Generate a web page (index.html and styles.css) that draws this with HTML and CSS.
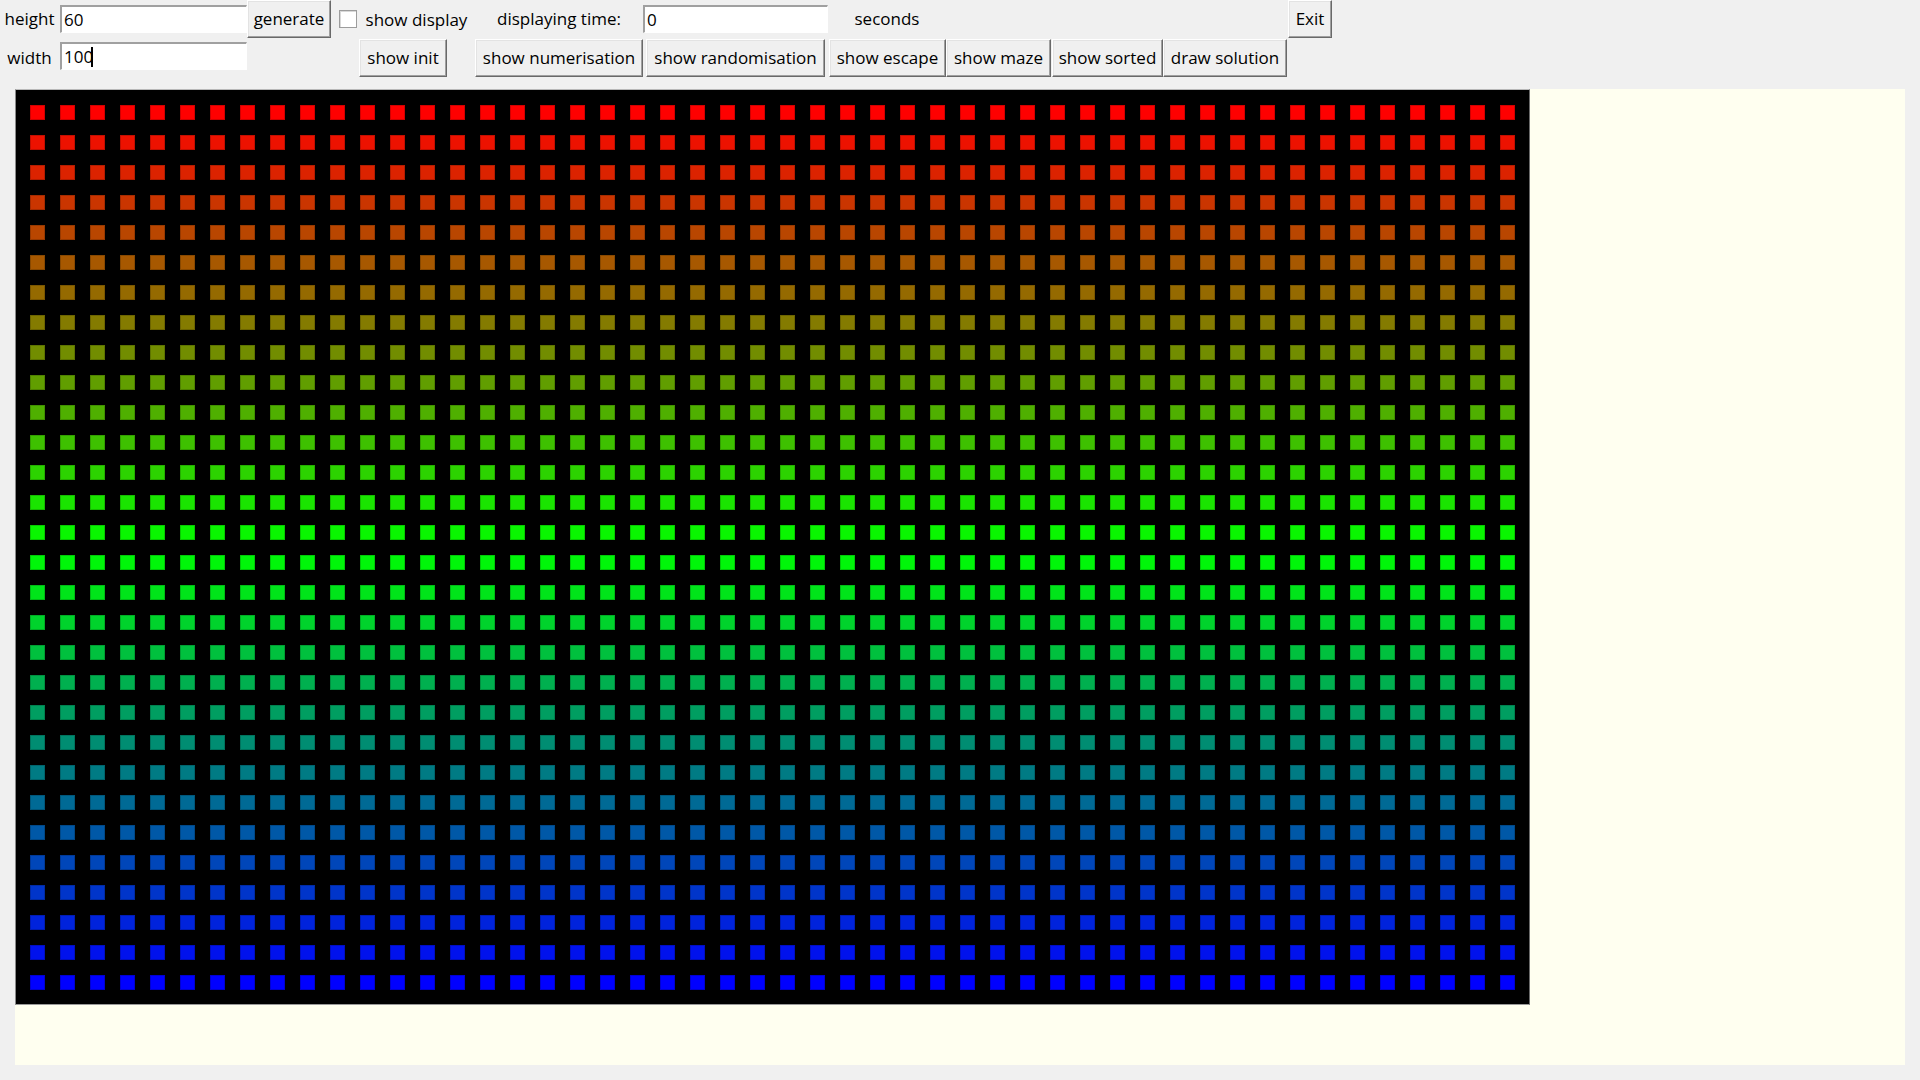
FILE: index.html
```html
<!DOCTYPE html>
<html>
<head>
<meta charset="utf-8">
<title>maze</title>
<link rel="stylesheet" href="styles.css">
</head>
<body>
<div class="toolbar">
  <div class="lbl c1 r1">height</div>
  <div class="entry c2 r1 wide">60</div>
  <div class="btn c3 r1 w-gen">generate</div>
  <div class="check c4 r1"><span class="box"></span><span>show display</span></div>
  <div class="lbl c5 r1">displaying time:</div>
  <div class="entry c6 r1 time">0</div>
  <div class="lbl c7 r1">seconds</div>
  <div class="btn c11 r1 w-exit">Exit</div>

  <div class="lbl c1 r2">width</div>
  <div class="entry c2 r2 wide">100<span class="caret"></span></div>
  <div class="btn c4 r2 w-init">show init</div>
  <div class="btn c5 r2 w-num">show numerisation</div>
  <div class="btn c6 r2 w-rand">show randomisation</div>
  <div class="btn c7 r2 w-esc">show escape</div>
  <div class="btn c8 r2 w-maze">show maze</div>
  <div class="btn c9 r2 w-sort">show sorted</div>
  <div class="btn c10 r2 w-draw">draw solution</div>
</div>
<div class="canvas">
  <div class="board" id="board"></div>
</div>
<script src="script.js"></script>
</body>
</html>
```
FILE: styles.css
```css
html, body {
  margin: 0;
  padding: 0;
  background: #f0f0f0;
  width: 1920px;
  height: 1080px;
  overflow: hidden;
  font-family: "Open Sans", "Noto Sans", sans-serif;
  font-size: 17px;
  color: #000;
}

.toolbar {
  display: grid;
  grid-template-columns: 59px 188px 85px 142px 170px 184px 118px 106px 111px 125px 45px;
  grid-template-rows: 38px 40px;
  height: 78px;
}

.c1 { grid-column: 1; }
.c2 { grid-column: 2; }
.c3 { grid-column: 3; }
.c4 { grid-column: 4; }
.c5 { grid-column: 5; }
.c6 { grid-column: 6; }
.c7 { grid-column: 7; }
.c8 { grid-column: 8; }
.c9 { grid-column: 9; }
.c10 { grid-column: 10; }
.c11 { grid-column: 11; }
.r1 { grid-row: 1; }
.r2 { grid-row: 2; }

.lbl {
  justify-self: center;
  align-self: center;
  white-space: nowrap;
  line-height: 22px;
}

.entry {
  align-self: center;
  justify-self: start;
  box-sizing: border-box;
  height: 28px;
  background: #fff;
  border-top: 2px solid #a0a0a0;
  border-left: 2px solid #a0a0a0;
  border-right: 1px solid #fff;
  border-bottom: 1px solid #fff;
  padding: 0 2px;
  line-height: 25px;
  white-space: nowrap;
}
.entry.wide { width: 187px; margin-left: 1px; }
.entry.time { width: 185px; margin-left: -1px; }
.r2.entry { margin-top: -4px; }

.caret {
  display: inline-block;
  width: 2px;
  height: 20px;
  background: #000;
  vertical-align: -4px;
  margin-left: -2px;
}

.btn {
  box-sizing: border-box;
  justify-self: start;
  align-self: start;
  height: 38px;
  background: #f0f0f0;
  border-top: 1px solid #fff;
  border-left: 1px solid #fff;
  border-right: 1px solid #696969;
  border-bottom: 1px solid #696969;
  box-shadow: inset -1px -1px 0 #a0a0a0, inset 1px 1px 0 #e3e3e3;
  text-align: center;
  line-height: 36px;
  white-space: nowrap;
}
.r2.btn { margin-top: 1px; }

.w-gen { width: 84px; }
.w-exit { width: 44px; }
.w-init { width: 88px; justify-self: center; }
.w-num { width: 168px; margin-left: 1px; }
.w-rand { width: 179px; margin-left: 2px; }
.w-esc { width: 117px; margin-left: 1px; }
.w-maze { width: 105px; }
.w-sort { width: 111px; }
.w-draw { width: 124px; }

.check {
  justify-self: center;
  align-self: center;
  display: flex;
  align-items: center;
  gap: 9px;
  white-space: nowrap;
}
.check .box {
  box-sizing: border-box;
  width: 18px;
  height: 18px;
  background: #fff;
  border: 1px solid #9c9c9c;
  box-shadow: inset 1px 1px 0 #d8d8d8;
}

.canvas {
  margin: 11px 0 0 15px;
  width: 1890px;
  height: 976px;
  background: #fffff0;
}

.board {
  box-sizing: border-box;
  width: 1515px;
  height: 916px;
  background: #000;
  border-top: 1px solid #b8b8b8;
  border-left: 1px solid #8a8a8a;
  border-right: 1px solid #6a6a6a;
  border-bottom: 1px solid #9a9a9a;
  padding: 15px 0 0 14px;
  display: grid;
  grid-template-columns: repeat(50, 15px);
  grid-auto-rows: 15px;
  gap: 15px;
}

.cell {
  width: 15px;
  height: 15px;
  box-shadow: inset 0 0 0 1px rgba(0, 0, 0, 0.18);
}
```
FILE: script.js
```js
(function () {
  var board = document.getElementById('board');
  var rows = 30, cols = 50;
  var frag = document.createDocumentFragment();
  for (var k = 0; k < rows; k++) {
    var t = 2 * k / (rows - 1);
    var r, g, b;
    if (t <= 1) {
      r = Math.round(255 * (1 - t)); g = Math.round(255 * t); b = 0;
    } else {
      r = 0; g = Math.round(255 * (2 - t)); b = Math.round(255 * (t - 1));
    }
    var color = 'rgb(' + r + ',' + g + ',' + b + ')';
    for (var i = 0; i < cols; i++) {
      var d = document.createElement('div');
      d.className = 'cell';
      d.style.background = color;
      frag.appendChild(d);
    }
  }
  board.appendChild(frag);
})();
```
